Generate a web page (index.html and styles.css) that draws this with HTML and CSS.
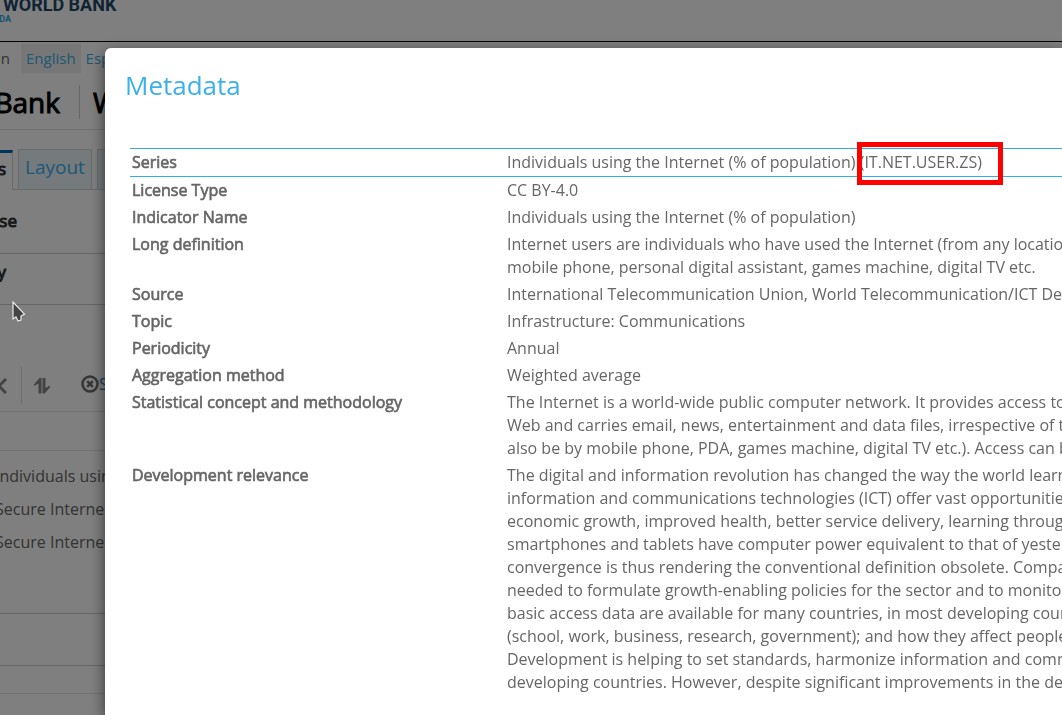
FILE: index.html
```html
<!DOCTYPE html>
<html lang="en">
<head>
<meta charset="utf-8">
<title>Metadata</title>
<link rel="stylesheet" href="styles.css">
</head>
<body>
<div class="page">
  <header class="brand">
    <div class="brand-name">WORLD BANK</div>
    <div class="brand-sub">IDA</div>
  </header>
  <nav class="languages">
    <span class="language-note">in</span>
    <a class="language language-on" href="#">English</a>
    <a class="language" href="#">Esp</a>
  </nav>
  <div class="title-bar">
    <h1 class="title">Bank</h1>
    <div class="title title-second">W</div>
  </div>
  <nav class="tabs">
    <a class="tab tab-on" href="#">Variables</a>
    <a class="tab" href="#">Layout</a>
    <a class="tab tab-rest" href="#" aria-label="Styles"></a>
  </nav>
  <h2 class="section section-first"><span class="section-name">Database</span></h2>
  <h2 class="section"><span class="section-name section-name-short">Country</span></h2>
  <div class="toolbar">
    <button class="tool" aria-label="Remove"><svg width="14" height="16" viewBox="0 0 14 16"><path d="M-1 1l14 14M13 1L-1 15" stroke="#868686" stroke-width="3"/></svg></button>
    <button class="tool tool-sort" aria-label="Sort"><svg width="16" height="16" viewBox="0 0 16 16"><path d="M0 6.500L5.500 0H7.500V15.500H4.500V5.500L0 8zM8.500 0H11.500V10L16 7.500V9.500L10.500 15.500H8.500z" fill="#868686"/></svg></button>
    <a class="tool-link" href="#"><svg width="18" height="18" viewBox="0 0 18 18"><circle cx="9" cy="9" r="7.500" fill="none" stroke="#6c6c6c" stroke-width="2.500"/><path d="M6.200 6.200l5.600 5.600M11.800 6.200l-5.600 5.600" stroke="#6c6c6c" stroke-width="2.500"/></svg>S</a>
  </div>
  <div class="list-gap"></div>
  <ul class="list">
    <li>Individuals usin</li>
    <li>Secure Interne</li>
    <li>Secure Interne</li>
  </ul>
  <div class="panel"></div>
  <div class="panel panel-small"></div>
</div>
<div class="overlay"></div>
<svg class="cursor" width="14" height="22" viewBox="0 0 14 22"><path d="M1 1V18L4 16L6 20L9 19V15L12.500 13z" fill="#444" stroke="#e8e8e8" stroke-width="1.200"/></svg>
<section class="dialog" role="dialog" aria-labelledby="dialog-title">
  <h2 class="dialog-title" id="dialog-title">Metadata</h2>
  <table class="meta">
    <tbody>
    <tr class="meta-head"><th scope="row">Series</th><td>Individuals using the Internet (% of population) <span class="code">(IT.NET.USER.ZS)</span></td></tr>
    <tr><th scope="row">License Type</th><td>CC BY-4.0</td></tr>
    <tr><th scope="row">Indicator Name</th><td>Individuals using the Internet (% of population)</td></tr>
    <tr><th scope="row">Long definition</th><td>Internet users are individuals who have used the Internet (from any location)<br>mobile phone, personal digital assistant, games machine, digital TV etc.</td></tr>
    <tr><th scope="row">Source</th><td>International Telecommunication Union, World Telecommunication/ICT Development</td></tr>
    <tr><th scope="row">Topic</th><td>Infrastructure: Communications</td></tr>
    <tr><th scope="row">Periodicity</th><td>Annual</td></tr>
    <tr><th scope="row">Aggregation method</th><td>Weighted average</td></tr>
    <tr><th scope="row">Statistical concept and methodology</th><td>The Internet is a world-wide public computer network. It provides access to<br>Web and carries email, news, entertainment and data files, irrespective of the<br>also be by mobile phone, PDA, games machine, digital TV etc.). Access can be</td></tr>
    <tr><th scope="row">Development relevance</th><td>The digital and information revolution has changed the way the world learns,<br>information and communications technologies (ICT) offer vast opportunities<br>economic growth, improved health, better service delivery, learning through<br>smartphones and tablets have computer power equivalent to that of yesterday<br>convergence is thus rendering the conventional definition obsolete. Comparable<br>needed to formulate growth-enabling policies for the sector and to monitor<br>basic access data are available for many countries, in most developing countries<br>(school, work, business, research, government); and how they affect people<br>Development is helping to set standards, harmonize information and communications<br>developing countries. However, despite significant improvements in the developing</td></tr>
    </tbody>
  </table>
</section>
</body>
</html>
```
FILE: styles.css
```css
* { box-sizing: border-box; }
body {
  margin: 0;
  height: 100vh;
  overflow: hidden;
  background: #fff;
  color: #666;
  font: 16px/23px "Open Sans", sans-serif;
}
a { color: #3bb0eb; text-decoration: none; }
h1, h2 { margin: 0; font-weight: 400; }

/* The page is scrolled sideways under the dialog. */
.page { margin-left: -80px; white-space: nowrap; }
.brand { height: 42px; padding-left: 83px; border-bottom: 1px solid #000; }
.brand-name {
  height: 12px;
  color: #204868;
  font: bold 18px/10px Roboto, sans-serif;
}
.brand-sub {
  width: 60px;
  margin-left: -52px;
  color: #2aa5d8;
  font: bold 9px/14px Roboto, sans-serif;
  text-align: right;
}
.languages { display: flex; padding: 2px 0 0 77px; font-size: 15px; line-height: 29px; }
.language-note { width: 24px; }
.language { padding: 0 5px; }
.language-on { background: #eee; }
.title-bar { display: flex; height: 57px; padding-top: 12px; border-bottom: 1px solid #ddd; }
.title {
  display: flex;
  justify-content: flex-end;
  width: 160px;
  height: 34px;
  padding-right: 19px;
  border-right: 1px solid #ccc;
  color: #000;
  font-size: 28px;
  line-height: 34px;
  -webkit-text-stroke: 1px #000;
}
.title-second { justify-content: flex-start; padding-left: 13px; border: 0; }
.tabs { display: flex; gap: 5px; padding-top: 19px; font-size: 19px; box-shadow: inset 0 -1px #ccc; }
.tab {
  height: 41px;
  padding: 0 6px;
  border: 1px solid #d4d4d4;
  background: #ebf4fb;
  line-height: 35px;
}
.tab-on {
  display: flex;
  justify-content: flex-end;
  width: 93px;
  margin-top: 1px;
  height: 40px;
  border-top: 3px solid #0068b3;
  border-bottom: 0;
  background: #fff;
  color: #333;
  font-size: 17px;
  line-height: 31px;
  -webkit-text-stroke: 1px #333;
}
.tab-rest { flex: 1; }
.section {
  height: 51px;
  padding-top: 6px;
  border-bottom: 1px solid #ccc;
  color: #333;
  font-size: 17px;
  -webkit-text-stroke: 1px #333;
}
.section-first { height: 64px; padding-top: 19px; }
.section-name { display: flex; justify-content: flex-end; width: 97px; }
.section-name-short { width: 86px; }
.toolbar {
  display: flex;
  height: 107px;
  padding: 62px 0 0 73px;
  border-bottom: 1px solid #e4e4e4;
}
.tool {
  width: 29px;
  height: 37px;
  padding: 0;
  border: 0;
  border-right: 1px solid #ddd;
  background: none;
  text-align: left;
}
.tool svg { display: block; }
.tool-sort { width: 59px; padding-left: 12px; border: 0; }
.tool-link { display: flex; align-items: center; height: 34px; color: #337ab7; }
.list-gap { height: 39px; border-bottom: 1px solid #e4e4e4; }
.list { height: 163px; margin: 0; padding: 9px 0 0 75px; border-bottom: 1px solid #ccc; list-style: none; line-height: 33px; }
.panel { height: 52px; border-bottom: 1px solid #ccc; }
.panel-small { height: 28px; border-color: #e4e4e4; }

.overlay { position: fixed; inset: 0; background: rgba(0, 0, 0, .5); }
.cursor { position: absolute; left: 12px; top: 301px; }
.dialog {
  position: fixed;
  inset: 48px 0 0 105px;
  padding: 20px 0 0 20px;
  overflow: hidden;
  border-top-left-radius: 6px;
  background: #fff;
  box-shadow: 0 5px 15px rgba(0, 0, 0, .6);
}
.dialog-title { color: #3bb0eb; font-size: 26px; line-height: 34px; }
.meta { width: 100%; margin: 46px 0 0 5px; border-spacing: 0; white-space: nowrap; table-layout: fixed; }
.meta th, .meta td { padding: 2px; text-align: left; vertical-align: top; }
.meta th { width: 375px; font-weight: 400; -webkit-text-stroke: .04em #666; }
.meta .meta-head th, .meta .meta-head td { border: solid #35aee8; border-width: 1px 0; }
.code { position: relative; }
.code::after {
  content: "";
  position: absolute;
  inset: -9px -21px -12px -3px;
  border: 5px solid #f00;
}
```
